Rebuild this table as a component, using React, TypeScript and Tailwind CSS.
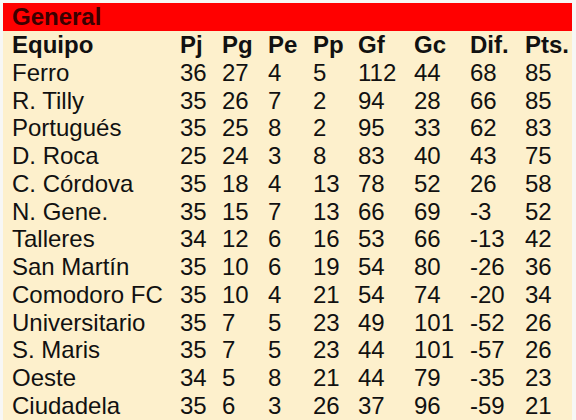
const rows: [string, string, string, string, string, string, string, string, string][] = [
  ['Ferro', '36', '27', '4', '5', '112', '44', '68', '85'],
  ['R. Tilly', '35', '26', '7', '2', '94', '28', '66', '85'],
  ['Portugués', '35', '25', '8', '2', '95', '33', '62', '83'],
  ['D. Roca', '25', '24', '3', '8', '83', '40', '43', '75'],
  ['C. Córdova', '35', '18', '4', '13', '78', '52', '26', '58'],
  ['N. Gene.', '35', '15', '7', '13', '66', '69', '-3', '52'],
  ['Talleres', '34', '12', '6', '16', '53', '66', '-13', '42'],
  ['San Martín', '35', '10', '6', '19', '54', '80', '-26', '36'],
  ['Comodoro FC', '35', '10', '4', '21', '54', '74', '-20', '34'],
  ['Universitario', '35', '7', '5', '23', '49', '101', '-52', '26'],
  ['S. Maris', '35', '7', '5', '23', '44', '101', '-57', '26'],
  ['Oeste', '34', '5', '8', '21', '44', '79', '-35', '23'],
  ['Ciudadela', '35', '6', '3', '26', '37', '96', '-59', '21'],
];

const headers = ['Equipo', 'Pj', 'Pg', 'Pe', 'Pp', 'Gf', 'Gc', 'Dif.', 'Pts.'];

const grid = 'grid grid-cols-[168px_42px_46px_45px_45px_56px_56px_55px_1fr] pl-[9px] leading-[27.75px] h-[27.75px]';

export default function App() {
  return (
    <div className="w-[576px] h-[420px] overflow-hidden bg-[#f7f7f5] pt-[3px] pl-[3px] pr-[4px] font-['Liberation_Sans',Arial,sans-serif] text-[24px] text-[#111]">
      <div className="h-full bg-[#fdf0cc]">
        <div className="h-[28px] bg-[#ff0000] pl-[9px] leading-[28px] font-bold text-[#3a0000]">General</div>
        <div className={`${grid} font-bold`}>
          {headers.map((h) => (
            <span key={h}>{h}</span>
          ))}
        </div>
        {rows.map((r) => (
          <div key={r[0]} className={grid}>
            {r.map((c, i) => (
              <span key={i} className="whitespace-nowrap">{c}</span>
            ))}
          </div>
        ))}
      </div>
    </div>
  );
}
